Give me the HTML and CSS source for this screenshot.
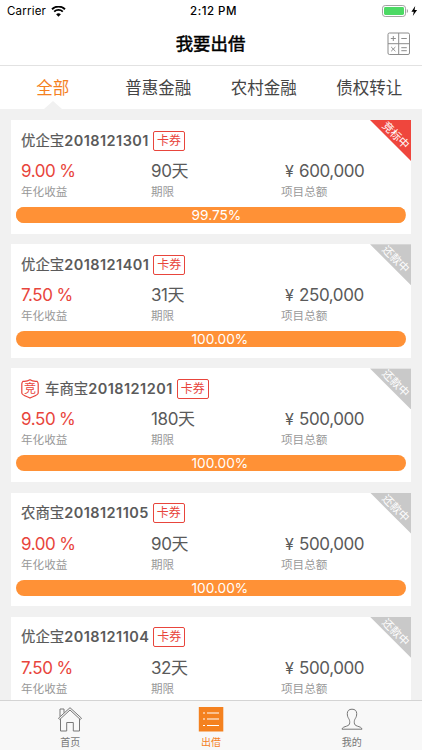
FILE: index.html
```html
<!DOCTYPE html>
<html lang="zh-CN">
<head>
    <meta charset="UTF-8">
    <meta name="viewport" content="width=device-width, initial-scale=1.0, viewport-fit=cover">
    <title>我要出借</title>
    <link rel="stylesheet" href="styles.css">
</head>
<body>
    <div class="status-bar">
        <div class="status-left">
            <span class="carrier">Carrier</span>
            <svg class="wifi" width="15" height="11" viewBox="0 0 15 11">
                <path d="M7.5 10.8L5.1 8.3a3.5 3.5 0 0 1 4.8 0z"/>
                <path d="M1 4.2a9.4 9.4 0 0 1 13 0M3.2 6.6a6.2 6.2 0 0 1 8.6 0" fill="none" stroke="#000" stroke-width="1.9" transform="translate(0 -1)"/>
            </svg>
        </div>
        <div class="status-time">2:12 PM</div>
        <div class="status-right">
            <svg width="36" height="12" viewBox="0 0 36 12">
                <rect x=".5" y=".5" width="23" height="11" rx="2.7" fill="#fff" stroke="#a3a3a3"/>
                <rect x="2" y="2" width="20" height="8" rx="1.4" fill="#4cd964"/>
                <path d="M24.8 4v4c.8-.3 1.2-1 1.2-2s-.4-1.7-1.2-2z" fill="#a3a3a3"/>
                <path d="M33.2 1L29.4 6.7h2.4l-1 4.3 4.3-6h-2.5z"/>
            </svg>
        </div>
    </div>

    <header class="header">
        <h1 class="header-title">我要出借</h1>
        <button class="calc-btn" aria-label="计算器">
            <svg width="24" height="24" viewBox="0 0 24 24" fill="none" stroke="#8c8c8c">
                <rect x="1" y="1" width="21.5" height="21.5" rx="1.5"/>
                <path d="M11.7 1v21.5M1 11.7h21.5M3.8 6.5h5M6.3 4v5M14.3 6.5h5.5M4.2 15l4.2 4.2M8.4 15l-4.2 4.2M14.3 15.7h5.5M14.3 18.7h5.5"/>
            </svg>
        </button>
    </header>

    <nav class="tabs">
        <a class="tab active">全部</a>
        <a class="tab">普惠金融</a>
        <a class="tab">农村金融</a>
        <a class="tab">债权转让</a>
    </nav>

    <main class="list">
        <section class="card">
            <div class="ribbon bidding"><span>竞标中</span></div>
            <div class="card-title">优企宝<b>2018121301</b><span class="coupon">卡券</span></div>
            <div class="stats">
                <div class="stat rate"><strong>9.00 %</strong><small>年化收益</small></div>
                <div class="stat"><strong>90天</strong><small>期限</small></div>
                <div class="stat"><strong><i class="yen">¥</i>600,000</strong><small>项目总额</small></div>
            </div>
            <div class="progress"><div class="progress-fill" style="width: 99.75%"></div><span>99.75%</span></div>
        </section>

        <section class="card">
            <div class="ribbon"><span>还款中</span></div>
            <div class="card-title">优企宝<b>2018121401</b><span class="coupon">卡券</span></div>
            <div class="stats">
                <div class="stat rate"><strong>7.50 %</strong><small>年化收益</small></div>
                <div class="stat"><strong>31天</strong><small>期限</small></div>
                <div class="stat"><strong><i class="yen">¥</i>250,000</strong><small>项目总额</small></div>
            </div>
            <div class="progress"><div class="progress-fill" style="width: 100%"></div><span>100.00%</span></div>
        </section>

        <section class="card">
            <div class="ribbon"><span>还款中</span></div>
            <div class="card-title">
                <span class="shield">
                    <svg width="18" height="20" viewBox="0 0 18 20" fill="none" stroke="#e8453c" stroke-width="1.2">
                        <path d="M9 .8C7 2.2 4 2.5 1.9 2.3 1.2 3 .8 4 .8 5v9c0 2.3 5.7 3.6 8.2 5 2.5-1.4 8.2-2.7 8.2-5V5c0-1-.4-2-1.1-2.7C14 2.5 11 2.2 9 .8z"/>
                    </svg>
                    <em>竞</em>
                </span>车商宝<b>2018121201</b><span class="coupon">卡券</span>
            </div>
            <div class="stats">
                <div class="stat rate"><strong>9.50 %</strong><small>年化收益</small></div>
                <div class="stat"><strong>180天</strong><small>期限</small></div>
                <div class="stat"><strong><i class="yen">¥</i>500,000</strong><small>项目总额</small></div>
            </div>
            <div class="progress"><div class="progress-fill" style="width: 100%"></div><span>100.00%</span></div>
        </section>

        <section class="card">
            <div class="ribbon"><span>还款中</span></div>
            <div class="card-title">农商宝<b>2018121105</b><span class="coupon">卡券</span></div>
            <div class="stats">
                <div class="stat rate"><strong>9.00 %</strong><small>年化收益</small></div>
                <div class="stat"><strong>90天</strong><small>期限</small></div>
                <div class="stat"><strong><i class="yen">¥</i>500,000</strong><small>项目总额</small></div>
            </div>
            <div class="progress"><div class="progress-fill" style="width: 100%"></div><span>100.00%</span></div>
        </section>

        <section class="card">
            <div class="ribbon"><span>还款中</span></div>
            <div class="card-title">优企宝<b>2018121104</b><span class="coupon">卡券</span></div>
            <div class="stats">
                <div class="stat rate"><strong>7.50 %</strong><small>年化收益</small></div>
                <div class="stat"><strong>32天</strong><small>期限</small></div>
                <div class="stat"><strong><i class="yen">¥</i>500,000</strong><small>项目总额</small></div>
            </div>
        </section>
    </main>

    <nav class="bottom-nav">
        <a class="nav-item">
            <svg width="26" height="26" viewBox="0 0 26 26" fill="none" stroke="#777">
                <path d="M1.5 12.2L13 1.7l11.5 10.5-1.2 1.3L13 4 2.7 13.5z"/>
                <path d="M3.5 13v12h6.2v-8.5h6.6V25h6.2V13M3 10.5V3h4v3.8"/>
            </svg>
            首页
        </a>
        <a class="nav-item active">
            <svg width="26" height="26" viewBox="0 0 26 26">
                <rect x=".8" y="1" width="24.5" height="24.5" fill="#f4811f"/>
                <path d="M5 7h2M5 13h2M5 19.5h2M9 7h12M9 13h12M9 19.5h12" stroke="#fff" stroke-width="1.2"/>
            </svg>
            出借
        </a>
        <a class="nav-item">
            <svg width="26" height="26" viewBox="0 0 26 26" fill="none" stroke="#777" stroke-linejoin="round">
                <path d="M13 3.2c-3 0-4.7 1.6-4.7 4.3 0 2.3.4 3.5 1.3 4.9.9 1.3 1.2 2.5 1.1 4.3-.1 2-1 2.7-3 3.4-2.3.8-4.5 1.3-4.7 3.1h20c-.2-1.8-2.4-2.3-4.7-3.1-2-.7-2.9-1.4-3-3.4-.1-1.8.2-3 1.1-4.3.9-1.4 1.3-2.6 1.3-4.9 0-2.7-1.7-4.3-4.7-4.3z"/>
            </svg>
            我的
        </a>
    </nav>
</body>
</html>
```
FILE: styles.css
```css
:root {
    --orange: #f4811f;
    --bar: #ff9136;
    --red: #e8453c;
    --text: #5a5a5a;
    --muted: #999;
}

* {
    margin: 0;
    padding: 0;
    box-sizing: border-box;
}

body {
    font-family: Inter, "Noto Sans CJK SC", sans-serif;
    background: #f1f1f1;
    color: var(--text);
    height: 750px;
    display: flex;
    flex-direction: column;
    overflow: hidden;
}

.status-bar {
    flex: none;
    height: 22px;
    background: #fff;
    color: #000;
    display: grid;
    grid-template-columns: 1fr auto 1fr;
    align-items: center;
    padding: 0 4px 0 7px;
    font-size: 11.5px;
}

.status-left {
    display: flex;
    align-items: center;
    gap: 5px;
}

.carrier {
    letter-spacing: 0.2px;
}

.status-time {
    font-weight: 500;
    letter-spacing: 0.5px;
    padding-left: 2px;
}

.status-right {
    display: flex;
    justify-content: flex-end;
}

.header {
    flex: none;
    height: 44px;
    background: #fff;
    border-bottom: 1px solid #e2e2e2;
    display: grid;
    grid-template-columns: 1fr auto 1fr;
    align-items: center;
    padding-right: 11px;
}

.header-title {
    grid-column: 2;
    font-size: 17.4px;
    font-weight: 400;
    line-height: 24px;
    color: #000;
    -webkit-text-stroke: 0.5px #000;
    margin-left: 10px;
}

.calc-btn {
    justify-self: end;
    background: none;
    border: none;
    height: 24px;
}

.tabs {
    flex: none;
    height: 43px;
    background: #fff;
    display: grid;
    grid-template-columns: repeat(4, 1fr);
}

.tab {
    position: relative;
    height: 43px;
    text-align: center;
    font-size: 16.5px;
    line-height: 45px;
    color: #444;
}

.tab.active {
    color: var(--orange);
}

.tab.active::after {
    content: "";
    position: absolute;
    left: 50%;
    bottom: 0;
    margin-left: -9px;
    border: 9px solid transparent;
    border-top: 0;
    border-bottom: 8px solid #f1f1f1;
}

.list {
    flex: 1;
    min-height: 0;
    overflow: hidden;
    padding: 11px 11px 0;
}

.card {
    position: relative;
    height: 113.7px;
    background: #fff;
    margin-bottom: 10.5px;
    padding: 10px 5px 0;
}

.card-title {
    display: flex;
    align-items: center;
    height: 21px;
    padding-left: 5px;
    font-size: 14.4px;
    line-height: 20px;
    -webkit-text-stroke: 0.2px;
}

.card-title b {
    font-weight: 600;
    font-size: 14.5px;
    letter-spacing: 0.45px;
    -webkit-text-stroke: 0;
}

.coupon {
    margin-left: 4px;
    width: 32px;
    height: 20px;
    border: 1px solid var(--red);
    border-radius: 2px;
    color: var(--red);
    font-size: 12px;
    line-height: 18px;
    text-align: center;
    -webkit-text-stroke: 0;
}

.shield {
    position: relative;
    width: 18px;
    height: 20px;
    margin-right: 6px;
    color: var(--red);
    -webkit-text-stroke: 0;
}

.shield svg {
    display: block;
}

.shield em {
    position: absolute;
    left: 0;
    top: 0;
    width: 18px;
    text-align: center;
    font-style: normal;
    font-size: 12px;
    line-height: 19px;
}

.stats {
    display: grid;
    grid-template-columns: 130px 130px 1fr;
    padding: 8px 0 0 5px;
}

.stat strong {
    display: block;
    height: 24px;
    line-height: 24px;
    font-size: 17px;
    font-weight: 400;
    letter-spacing: -0.4px;
    white-space: nowrap;
}

.stat small {
    display: block;
    height: 18px;
    line-height: 18px;
    font-size: 11.6px;
    color: var(--muted);
}

.rate strong {
    color: var(--red);
    word-spacing: -0.5px;
}

.yen {
    display: inline-block;
    width: 18px;
    padding-left: 4px;
    font-style: normal;
    font-size: 16px;
}

.progress {
    position: relative;
    height: 16px;
    margin-top: 6px;
    border-radius: 8px;
    overflow: hidden;
    background: #ffa04f;
}

.progress-fill {
    height: 100%;
    background: var(--bar);
}

.progress span {
    position: absolute;
    left: 45%;
    top: 0;
    color: #fff;
    font-size: 13.7px;
    line-height: 17px;
}

.ribbon {
    position: absolute;
    top: 0;
    right: 0;
    width: 41px;
    height: 41px;
    background: #c9c9c9;
    clip-path: polygon(0 0, 100% 0, 100% 100%);
}

.ribbon.bidding {
    background: #ef463d;
}

.ribbon span {
    position: absolute;
    left: 5px;
    top: 8px;
    width: 42px;
    color: #fff;
    font-size: 11px;
    line-height: 14px;
    text-align: center;
    transform: rotate(45deg);
}

.bottom-nav {
    flex: none;
    height: 50px;
    background: #f8f8f8;
    border-top: 1px solid #d4d4d4;
    display: grid;
    grid-template-columns: repeat(3, 1fr);
}

.nav-item {
    display: flex;
    flex-direction: column;
    align-items: center;
    padding-top: 5px;
    font-size: 10px;
    line-height: 20px;
    color: #777;
}

.nav-item.active {
    color: var(--orange);
}
```
